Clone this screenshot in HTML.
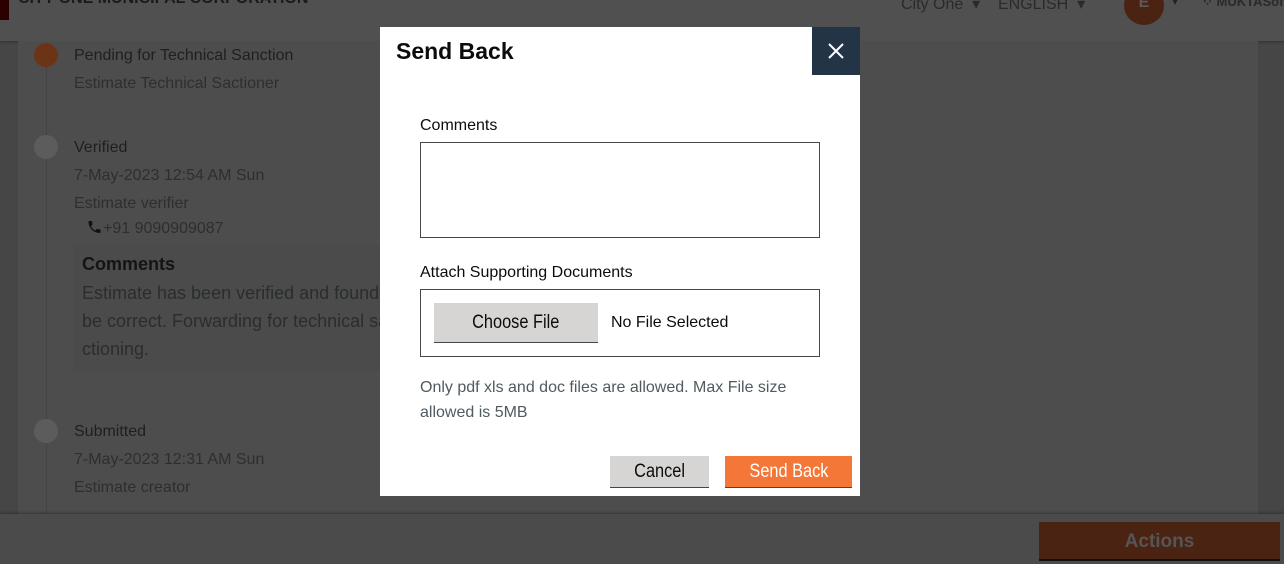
<!DOCTYPE html><html><head><style>
*{margin:0;padding:0;box-sizing:border-box}
body{width:1284px;height:564px;overflow:hidden;background:#464646;font-family:"Liberation Sans",sans-serif;position:relative}
.a{position:absolute;white-space:nowrap}
.n{display:inline-block;transform:scaleX(.86);transform-origin:left center}
</style></head><body>
<div class="a" style="left:0;top:0;width:1284px;height:41px;background:#505050;box-shadow:0 1px 3px rgba(0,0,0,.3)"></div>
<div class="a" style="left:0;top:0;width:9px;height:20px;background:#2a0000"></div>
<div class="a" style="left:18px;top:-10px;font-size:16px;font-weight:bold;color:#1a1a1a">CITY ONE MUNICIPAL CORPORATION</div>
<div class="a" style="left:901px;top:-6px;font-size:16px;color:#2a2a2a">City One &nbsp;▾ &nbsp;&nbsp;&nbsp;ENGLISH &nbsp;▾</div>
<div class="a" style="left:1124px;top:-14px;width:40px;height:39px;border-radius:50%;background:#4a2313;color:#5a5a5a;font-size:16px;font-weight:bold;text-align:center;line-height:34px">E</div>
<div class="a" style="left:1172px;top:-6px;font-size:12px;color:#222">▾</div>
<div class="a" style="left:1202px;top:-6px;font-size:13px;font-weight:bold;color:#2a2a2a">⁘ MUKTASoft</div>
<div class="a" style="left:18px;top:41px;width:1240px;height:473px;background:#4d4d4d"></div>
<div class="a" style="left:46px;top:66px;width:1px;height:448px;background:#444"></div>
<div class="a" style="left:34px;top:43px;width:24px;height:24px;border-radius:50%;background:#6b3416"></div>
<div class="a" style="left:34px;top:135px;width:24px;height:24px;border-radius:50%;background:#5c5c5c"></div>
<div class="a" style="left:34px;top:419px;width:24px;height:24px;border-radius:50%;background:#5c5c5c"></div>
<div class="a" style="left:74px;top:47px;font-size:16px;color:#1f1f1f">Pending for Technical Sanction</div>
<div class="a" style="left:74px;top:75px;font-size:16px;color:#2c2f31">Estimate Technical Sactioner</div>
<div class="a" style="left:74px;top:139px;font-size:16px;color:#1f1f1f">Verified</div>
<div class="a" style="left:74px;top:167px;font-size:16px;color:#2c2f31">7-May-2023 12:54 AM Sun</div>
<div class="a" style="left:74px;top:195px;font-size:16px;color:#2c2f31">Estimate verifier</div>
<div class="a" style="left:86px;top:219px;font-size:16px;color:#2c2f31"><svg width="17" height="16" viewBox="0 0 24 24" style="vertical-align:-2px"><path fill="#111" d="M6.6 10.8c1.4 2.8 3.8 5.1 6.6 6.6l2.2-2.2c.3-.3.7-.4 1-.2 1.1.4 2.3.6 3.6.6.6 0 1 .4 1 1V20c0 .6-.4 1-1 1C10.6 21 3 13.4 3 4c0-.6.4-1 1-1h3.5c.6 0 1 .4 1 1 0 1.3.2 2.5.6 3.6.1.3 0 .7-.2 1z"/></svg>+91 9090909087</div>
<div class="a" style="left:74px;top:244px;width:320px;height:128px;background:#4b4b4b"></div>
<div class="a" style="left:82px;top:254px;font-size:18px;font-weight:bold;color:#141414">Comments</div>
<div class="a" style="left:82px;top:279px;font-size:18px;line-height:28px;color:#2a2d2f">Estimate has been verified and found to<br>be correct. Forwarding for technical sa<br>ctioning.</div>
<div class="a" style="left:74px;top:423px;font-size:16px;color:#1f1f1f">Submitted</div>
<div class="a" style="left:74px;top:451px;font-size:16px;color:#2c2f31">7-May-2023 12:31 AM Sun</div>
<div class="a" style="left:74px;top:479px;font-size:16px;color:#2c2f31">Estimate creator</div>
<div class="a" style="left:0;top:514px;width:1284px;height:50px;background:#4b4b4b;box-shadow:0 -1px 3px rgba(0,0,0,.3)"></div>
<div class="a" style="left:1039px;top:522px;width:241px;height:39px;background:#4a2313;border-bottom:2px solid #111;text-align:center;font-size:19px;font-weight:bold;color:#555;line-height:40px">Actions</div>

<div class="a" style="left:380px;top:27px;width:480px;height:469px;background:#fff"></div>
<div class="a" style="left:396px;top:38px;font-size:23px;font-weight:bold;color:#0b0c0c">Send Back</div>
<div class="a" style="left:812px;top:27px;width:48px;height:48px;background:#243447">
<svg width="48" height="48"><path d="M17 17L31 31M31 17L17 31" stroke="#fff" stroke-width="2"/></svg></div>
<div class="a" style="left:420px;top:117px;font-size:16px;color:#0b0c0c">Comments</div>
<div class="a" style="left:420px;top:142px;width:400px;height:96px;border:1px solid #464646"></div>
<div class="a" style="left:420px;top:264px;font-size:16px;color:#0b0c0c">Attach Supporting Documents</div>
<div class="a" style="left:420px;top:289px;width:400px;height:68px;border:1px solid #464646"></div>
<div class="a" style="left:434px;top:303px;width:164px;height:40px;background:#d6d5d3;border-bottom:1px solid #464646;text-align:center;line-height:40px;font-size:19px;color:#0b0c0c"><span class="n" style="transform-origin:center">Choose File</span></div>
<div class="a" style="left:611px;top:314px;font-size:16px;color:#0b0c0c">No File Selected</div>
<div class="a" style="left:420px;top:375px;font-size:16px;line-height:25px;color:#505a5f">Only pdf xls and doc files are allowed. Max File size<br>allowed is 5MB</div>
<div class="a" style="left:610px;top:456px;width:99px;height:32px;background:#d6d5d3;border-bottom:1px solid #464646;text-align:center;line-height:31px;font-size:19px;color:#0b0c0c"><span class="n" style="transform-origin:center">Cancel</span></div>
<div class="a" style="left:725px;top:456px;width:127px;height:32px;background:#f47738;border-bottom:1px solid #464646;text-align:center;line-height:31px;font-size:19px;color:#fff"><span class="n" style="transform-origin:center">Send Back</span></div>
</body></html>
